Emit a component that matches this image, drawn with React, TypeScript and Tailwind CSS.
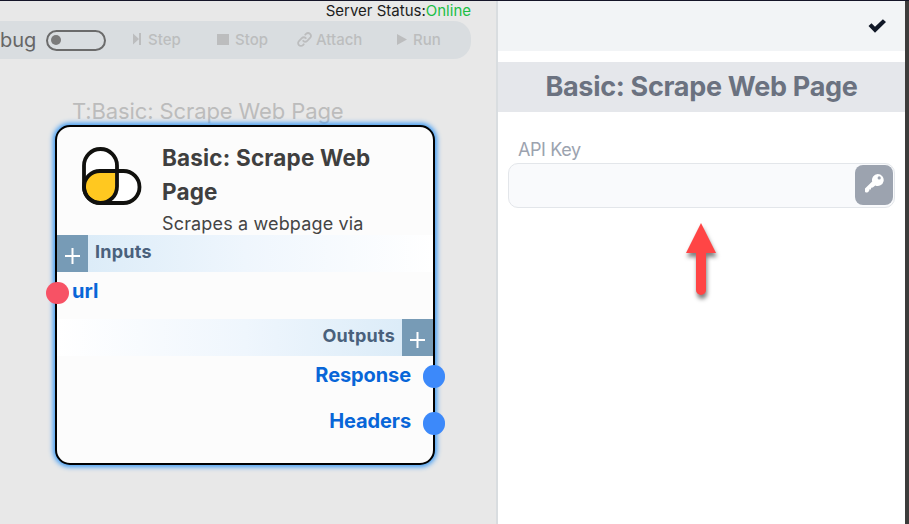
import type { ReactNode } from "react";
import { HiOutlineLink } from "react-icons/hi";

function ToolButton({ icon, label, className }: { icon: ReactNode; label: string; className: string }) {
  return (
    <button className={`flex shrink-0 items-center text-[15px] font-medium leading-5 text-[#bcbdbe] ${className}`}>
      {icon}
      <span>{label}</span>
    </button>
  );
}

function StepIcon() {
  return (
    <svg className="-mt-[2px] h-[12px] w-[8px]" viewBox="0 0 8 12" fill="currentColor">
      <path d="M0 0.500 6 6 0 11.500zM6 0h2v12H6z" />
    </svg>
  );
}

function StopIcon() {
  return <span className="-mt-[2px] h-[11px] w-[12px] bg-[#bcbdbe]" />;
}

function RunIcon() {
  return (
    <svg className="-mt-[2px] h-[11px] w-[10px]" viewBox="0 0 10 11" fill="currentColor">
      <path d="M0 0 10 5.500 0 11z" />
    </svg>
  );
}

function CheckIcon() {
  return (
    <svg className="h-[14px] w-[18px] text-[#111827]" viewBox="0 0 18 14" fill="currentColor">
      <path d="M0.500 7 3.500 4.300 7 7.800 14.900 0.300 18 3 7 13.800z" />
    </svg>
  );
}

function KeyIcon() {
  return (
    <svg className="size-[19px] text-white" viewBox="0 0 19 19" fill="currentColor">
      <path
        fillRule="evenodd"
        d="M12.700 0a6 6 0 1 1-2.400 11.500L7.800 13.600 6.200 13.800 5.900 15.400 4.200 15.600V16.900L2.400 18.500H.8L0 17.700V14.600L7.200 7.600A6 6 0 0 1 12.700 0zM14.200 2.300a1.600 1.600 0 1 0 0 3.200 1.600 1.600 0 0 0 0-3.200z"
      />
    </svg>
  );
}

function Toolbar() {
  return (
    <div className="flex h-[38px] w-[471px] items-center rounded-r-[17px] bg-[#d9dde0]">
      <span className="-mt-px w-[46px] text-[20px] leading-6 text-[#666]">bug</span>
      <div className="flex h-[21px] w-[60px] shrink-0 items-center rounded-full border-2 border-[#6b6b6b] pl-[3px]">
        <span className="size-[10px] rounded-full bg-[#7b7b7b]" />
      </div>
      <ToolButton className="ml-[27px] w-[84px] gap-[7px]" icon={<StepIcon />} label="Step" />
      <ToolButton className="w-[79px] gap-[6px]" icon={<StopIcon />} label="Stop" />
      <ToolButton className="w-[101px] gap-[3px]" icon={<HiOutlineLink className="-mt-[2px] size-[17px] stroke-[2.5]" />} label="Attach" />
      <ToolButton className="gap-[6px]" icon={<RunIcon />} label="Run" />
    </div>
  );
}

function Logo() {
  return (
    <svg className="h-[58px] w-[60px] shrink-0" viewBox="0 0 60 58" fill="none">
      <rect x="2" y="2" width="33" height="54" rx="16.500" fill="#fff" />
      <rect x="2" y="24" width="55.500" height="32" rx="16" fill="#fff" />
      <path d="M2 40a16 16 0 0 1 16-16h17v15.500a16.500 16.500 0 0 1-33 0z" fill="#ffc820" />
      <rect x="2" y="2" width="33" height="54" rx="16.500" stroke="#11110e" strokeWidth="3.800" />
      <rect x="2" y="24" width="55.500" height="32" rx="16" stroke="#11110e" strokeWidth="3.800" />
    </svg>
  );
}

function Plus() {
  return (
    <div className="flex h-full w-[31px] shrink-0 items-center justify-center bg-[#779bb6] pt-1">
      <svg className="h-[16px] w-[15px]" viewBox="0 0 15 16" fill="#fff">
        <path d="M6.500 0h2v7H15v2H8.500v7h-2V9H0V7h6.500z" />
      </svg>
    </div>
  );
}

function Node() {
  return (
    <div className="absolute left-[55px] top-[125px] h-[340px] w-[380px] rounded-[15px] border-2 border-black bg-[#fcfcfc] shadow-[0_0_5px_2px_#3d9bf5]">
      <div className="flex h-[108px] pl-[24.500px] pt-[20px]">
        <Logo />
        <div className="-mt-[6px] ml-[20.500px]">
          <h2 className="w-[240px] text-[22.500px] font-bold leading-[34px] tracking-[0.18px] text-[#3f3f3f]">Basic: Scrape Web Page</h2>
          <p className="text-[18px] leading-[29px] tracking-[0.15px] text-[#444]">Scrapes a webpage via</p>
        </div>
      </div>
      <div className="flex h-[37px] bg-linear-to-r from-[#d8eaf7] via-[#eff6fd] to-white">
        <Plus />
        <span className="ml-[7px] pt-[3px] text-[18px] font-bold leading-7 tracking-[0.25px] text-[#4a617c]">Inputs</span>
      </div>
      <div className="flex h-[47px] pl-[15px] pt-[5px] text-[20px] font-bold leading-7 text-[#0866d8]">url</div>
      <div className="flex h-[37px] justify-end bg-linear-to-l from-[#d8eaf7] via-[#eff6fd] to-white">
        <span className="mr-[7px] pt-[3px] text-[18px] font-bold leading-7 tracking-[0.25px] text-[#4a617c]">Outputs</span>
        <Plus />
      </div>
      <div className="flex flex-col items-end gap-[18px] pr-[22px] pt-[5px] text-[20px] font-bold leading-7 tracking-[-0.1px] text-[#0866d8]">
        <span>Response</span>
        <span>Headers</span>
      </div>
      <span className="absolute -left-[11px] top-[155px] h-[22px] w-[23px] rounded-full bg-[#f75265]" />
      <span className="absolute -right-[12px] top-[238px] h-[23px] w-[22px] rounded-full bg-[#3c89fa]" />
      <span className="absolute -right-[12px] top-[285px] h-[23px] w-[22px] rounded-full bg-[#3c89fa]" />
    </div>
  );
}

export default function App() {
  return (
    <div className="relative flex h-[524px] w-[909px] overflow-hidden border-t border-[#151528] bg-white font-['Inter',sans-serif]">
      <main className="h-full w-[498px] shrink-0 border-r-2 border-[#d9dde0] bg-[#e8e8e8]">
        <div className="flex h-5 w-[471px] justify-end text-[15px] leading-5 text-[#1c1c1c]">
          <span>Server Status:</span>
          <span className="text-[#1bbf45]">Online</span>
        </div>
        <Toolbar />
        <p className="pl-[72px] pt-[38px] text-[22px] leading-7 tracking-[-0.11px] text-[#bcbcbc]">T:Basic: Scrape Web Page</p>
      </main>
      <aside className="flex w-[407px] flex-col">
        <div className="flex h-[50px] items-center justify-end bg-[#f2f4f6] pr-[19px]">
          <CheckIcon />
        </div>
        <h1 className="mt-[11px] flex h-[50px] items-center justify-center bg-[#e5e7eb] text-[27px] font-bold tracking-[-0.3px] text-[#6b7280]">
          <span>Basic: Scrape Web Page</span>
        </h1>
        <label className="mt-[25px] pl-[20px] text-[18px] leading-[26px] tracking-[-0.4px] text-[#9ca3af]">API Key</label>
        <div className="ml-[10px] flex h-[45px] w-[387px] justify-end rounded-[10px] border border-[#e3e6ea] bg-[#f9fafc] pr-[1px] pt-[1px]">
          <button className="flex h-[40px] w-[38px] justify-center rounded-lg bg-[#9ca3af] pt-[9px]">
            <KeyIcon />
          </button>
        </div>
      </aside>
      <div className="h-full w-1 bg-[#3d3c3b]" />
      <div className="absolute inset-0 -top-px h-[524px]">
        <Node />
      </div>
      <svg className="absolute left-[680px] top-[215px] h-[90px] w-[45px] drop-shadow-[1px_4px_2px_#00000080]" viewBox="0 0 45 90">
        <path d="M21 7 36 37H26V74a5 5 0 0 1-10 0V37H6z" fill="#ff4545" />
      </svg>
    </div>
  );
}
